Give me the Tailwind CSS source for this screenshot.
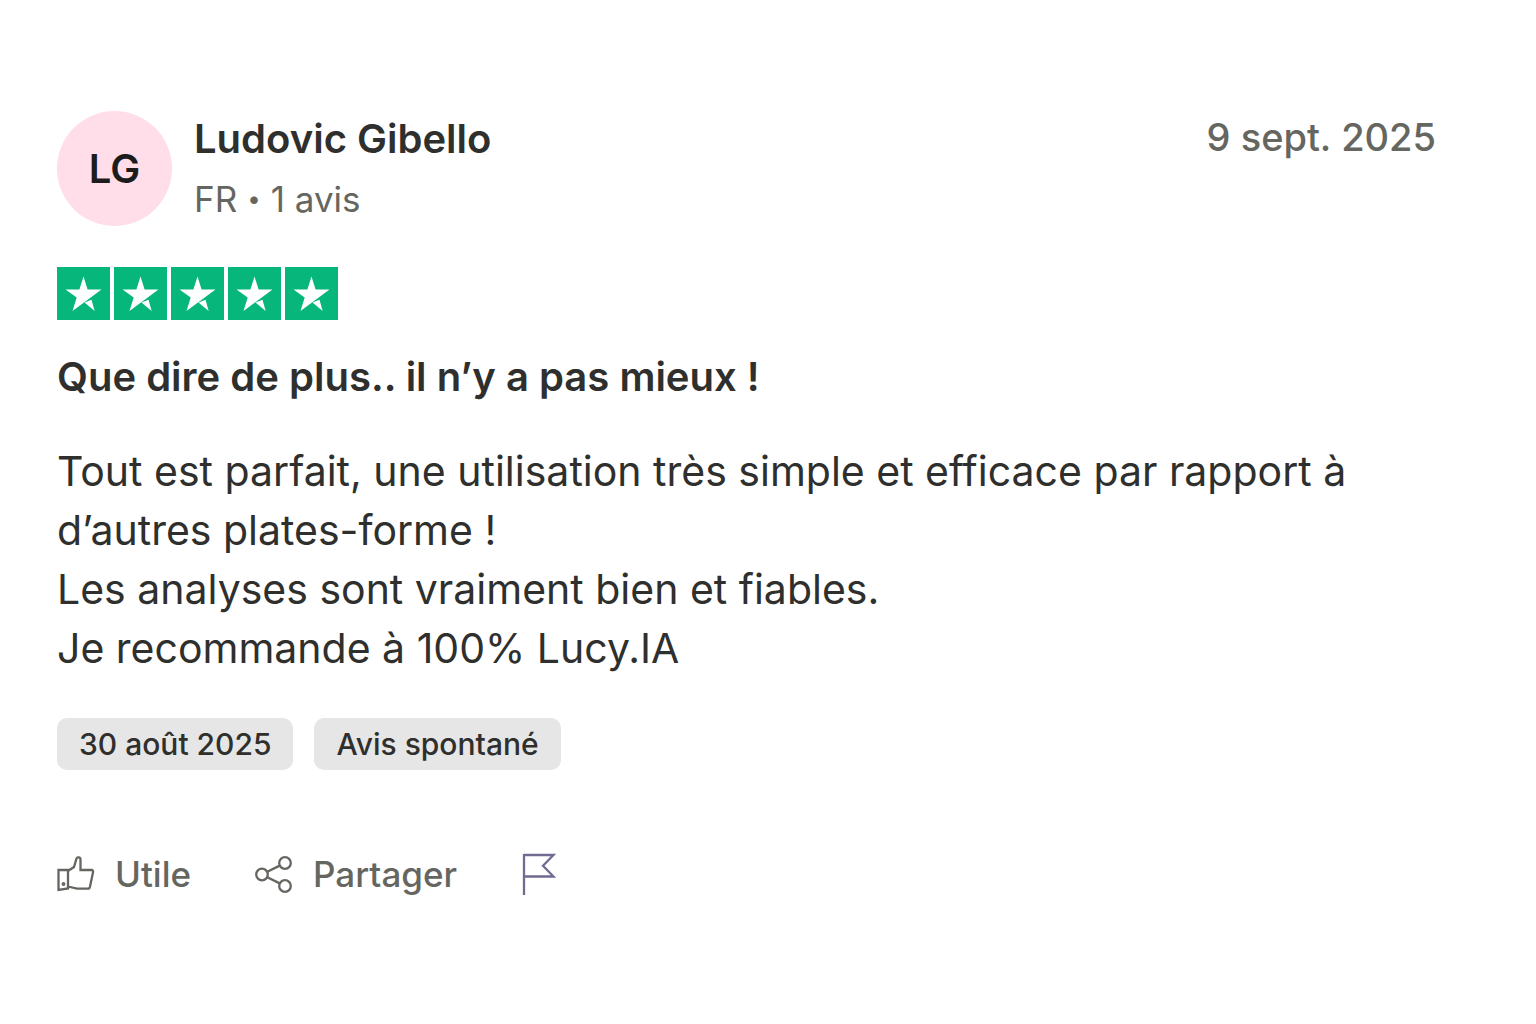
<!DOCTYPE html>
<html lang="fr">
<head>
<meta charset="utf-8">
<meta name="viewport" content="width=device-width, initial-scale=1">
<title>Avis de Ludovic Gibello</title>
<script src="https://cdn.jsdelivr.net/npm/@tailwindcss/browser@4"></script>
</head>
<body class="bg-white font-['Inter',sans-serif] text-[#2f2f2d]">
<svg class="hidden" aria-hidden="true">
  <symbol id="star" viewBox="0 0 53 53">
    <path fill="#07b67b" d="M0 0h53v53H0z"/>
    <path fill="#fff" d="M26.500 9.500l4.100 13H44.500L15.500 44l4.200-13.400L8.500 22.500h13.900z"/>
    <path fill="#fff" d="M27.500 35.500l7-2.700L37.700 44z"/>
  </symbol>
</svg>
<main>
  <article class="pt-[111px] pr-[100px] pb-16 pl-[57px]">
    <header class="flex items-start justify-between">
      <div class="flex gap-[22px]">
        <div class="flex size-[115px] shrink-0 items-center justify-center rounded-full bg-[#ffdee9] text-[40px] font-semibold text-[#1c1c1c]">LG</div>
        <div>
          <h2 class="text-[40px] leading-[56px] font-semibold">Ludovic Gibello</h2>
          <p class="mt-2 flex gap-[10px] text-[35px] leading-[48px] text-[#65665f]"><span>FR</span><span class="text-[24px]">•</span><span>1 avis</span></p>
        </div>
      </div>
      <time datetime="2025-09-09" class="text-[38px] leading-[52px] font-medium text-[#65665f]">9 sept. 2025</time>
    </header>
    <div class="mt-[41px] flex gap-1" role="img" aria-label="5 étoiles sur 5">
      <svg class="size-[53px]"><use href="#star"/></svg>
      <svg class="size-[53px]"><use href="#star"/></svg>
      <svg class="size-[53px]"><use href="#star"/></svg>
      <svg class="size-[53px]"><use href="#star"/></svg>
      <svg class="size-[53px]"><use href="#star"/></svg>
    </div>
    <h3 class="mt-8 text-[40px] leading-[50px] font-semibold">Que dire de plus.. il n’y a pas mieux !</h3>
    <p class="mt-10 text-[41px] leading-[59px]">Tout est parfait, une utilisation très simple et efficace par rapport à<br>d’autres plates-forme !<br>Les analyses sont vraiment bien et fiables.<br>Je recommande à 100% Lucy.IA</p>
    <div class="mt-10 flex gap-[21px] text-[30px] leading-[52px] font-medium">
      <span class="rounded-[10px] bg-[#e6e6e6] px-[22px]">30 août 2025</span>
      <span class="rounded-[10px] bg-[#e6e6e6] px-[22px]">Avis spontané</span>
    </div>
    <footer class="mt-20 flex items-center gap-16 text-[35px] leading-[48px] font-medium text-[#65665f]">
      <button type="button" class="flex items-center gap-5">
        <svg class="size-[38px]" viewBox="0 0 38 38" fill="none" stroke="currentColor" stroke-width="2.300"><path d="M1.500 15h9.500v18.500l-9.500 1.500zM11 16l6-4 2.500-8.500c.5-1.700 4-1.500 4 1v10.500H34.500c1.300 0 1.800 1 1.500 2.200l-3 14.500c-.3 1.300-1 2-2.300 2H20L11 31.500"/><circle cx="6.500" cy="29" r=".8" fill="currentColor"/></svg>
        Utile
      </button>
      <button type="button" class="flex items-center gap-5">
        <svg class="size-[38px]" viewBox="0 0 38 38" fill="none" stroke="currentColor" stroke-width="2.300"><circle cx="7" cy="19.500" r="5.800"/><circle cx="30" cy="8" r="5.800"/><circle cx="30" cy="31" r="5.800"/><path d="M12.300 16.800l12.400-6.200M12.300 22.200l12.400 6.200"/></svg>
        Partager
      </button>
      <button type="button" aria-label="Signaler">
        <svg class="h-[42px] w-9" viewBox="0 0 36 42" fill="none" stroke="#6f6b91" stroke-width="2.300"><path d="M3 42V1M3 2h29.500L22 12.800 32.500 23.500H3"/></svg>
      </button>
    </footer>
  </article>
</main>
</body>
</html>
